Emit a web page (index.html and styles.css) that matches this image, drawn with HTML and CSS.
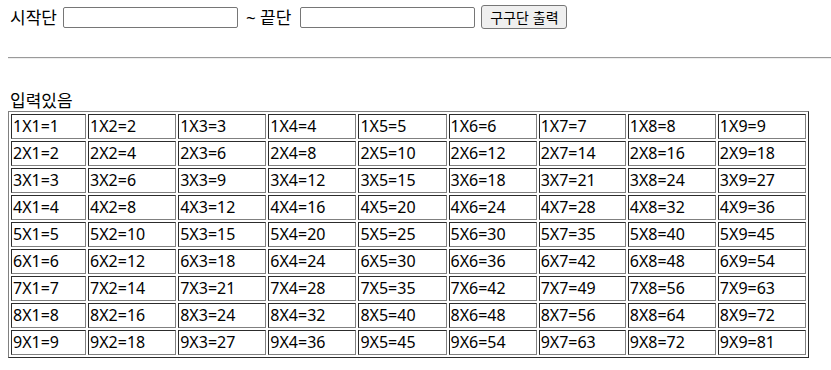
FILE: index.html
```html
<!DOCTYPE html>
<html lang="ko">
<head>
<meta charset="utf-8">
<title>구구단</title>
<link rel="stylesheet" href="styles.css">
</head>
<body>
<div class="controls">
  <label class="lbl" for="start">시작단</label>
  <input id="start" class="num" type="text">
  <span class="lbl mid">~ 끝단</span>
  <input id="end" class="num" type="text">
  <button class="btn" type="button">구구단 출력</button>
</div>
<hr class="rule">
<div class="status">입력있음</div>
<table class="gugu" id="gugu"></table>
<script src="app.js"></script>
</body>
</html>
```
FILE: app.js
```js
var t = document.getElementById('gugu');
var html = '<colgroup>';
for (var c = 1; c <= 9; c++) html += '<col class="col-' + c + '">';
html += '</colgroup><tbody>';
for (var a = 1; a <= 9; a++) {
  html += '<tr>';
  for (var b = 1; b <= 9; b++) {
    html += '<td>' + a + 'X' + b + '=' + (a * b) + '</td>';
  }
  html += '</tr>';
}
html += '</tbody>';
t.innerHTML = html;
```
FILE: styles.css
```css
html, body {
  margin: 0;
  padding: 0;
  background: #fff;
}
body {
  padding: 0 0 0 8px;
  font-family: "Noto Sans", "Noto Sans CJK KR", sans-serif;
  font-size: 16px;
  color: #000;
}
.controls {
  display: flex;
  align-items: center;
  height: 26px;
  padding-top: 4px;
}
.lbl {
  font-size: 17px;
  line-height: 21px;
  padding-left: 2px;
}
.mid {
  margin-left: 6px;
}
.num {
  box-sizing: border-box;
  width: 175px;
  height: 21px;
  margin: 0 0 0 6px;
  padding: 1px 2px;
  border: 1px solid #767676;
  border-radius: 2px;
  font-size: 13px;
}
#end {
  margin-left: 9px;
}
.btn {
  box-sizing: border-box;
  width: 86px;
  height: 24px;
  margin-left: 6px;
  padding: 0 4px;
  border: 1px solid #767676;
  border-radius: 3px;
  background: #efefef;
  font-family: "Noto Sans CJK KR", sans-serif;
  font-size: 14px;
  line-height: 20px;
  color: #000;
}
.rule {
  margin: 27px 0 0 0;
  height: 0;
  border: 0;
  border-top: 1px solid #9a9a9a;
  border-bottom: 1px solid #eeeeee;
}
.status {
  margin-top: 31px;
  padding-left: 2px;
  font-size: 17px;
  line-height: 21px;
}
.gugu {
  table-layout: fixed;
  width: 801px;
  border: 1px outset #808080;
  border-spacing: 2px;
  font-size: 16px;
}
.gugu col { width: 88px; }
.gugu .col-1 { width: 75px; }
.gugu .col-7 { width: 87px; }
.gugu td {
  box-sizing: border-box;
  padding: 1px;
  border: 1px inset #808080;
  line-height: 21px;
  white-space: nowrap;
  overflow: hidden;
}
```
